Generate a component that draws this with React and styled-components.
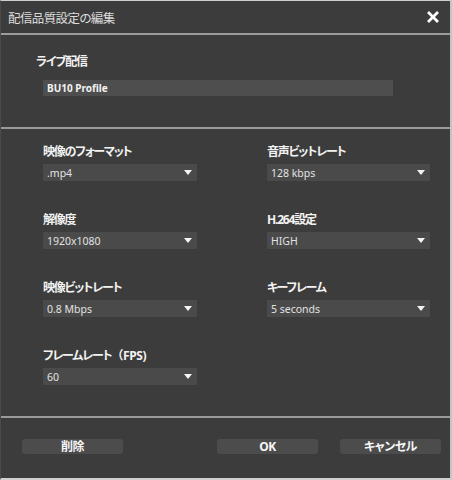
import React from 'react';
import styled, { createGlobalStyle } from 'styled-components';

const GlobalStyle = createGlobalStyle`
  html, body {
    margin: 0;
    padding: 0;
    background: #d6d6d6;
  }
  * {
    box-sizing: border-box;
  }
`;

const fields = [
  { label: '映像のフォーマット', value: '.mp4', side: 'left' },
  { label: '音声ビットレート', value: '128 kbps', side: 'right' },
  { label: '解像度', value: '1920x1080', side: 'left' },
  { label: 'H.264設定', value: 'HIGH', side: 'right' },
  { label: '映像ビットレート', value: '0.8 Mbps', side: 'left' },
  { label: 'キーフレーム', value: '5 seconds', side: 'right' },
  { label: 'フレームレート', note: '（FPS)', value: '60', side: 'left' },
];

export default function App() {
  return (
    <>
      <GlobalStyle />
      <Dialog>
        <TitleBar>
          <Title>配信品質設定の編集</Title>
          <CloseButton aria-label="close">
            <svg width="12" height="12" viewBox="0 0 12 12">
              <path d="M2 2 L10 10 M10 2 L2 10" stroke="#fff" strokeWidth="2.8" strokeLinecap="square" />
            </svg>
          </CloseButton>
        </TitleBar>

        <ProfileSection>
          <Label>ライブ配信</Label>
          <NameInput>BU10 Profile</NameInput>
        </ProfileSection>

        <FieldGrid>
          {fields.map((f) => (
            <Field key={f.label}>
              <Label>
                {f.label}
                {f.note && <Note>{f.note}</Note>}
              </Label>
              <Select $wide={f.side === 'right'}>
                <span>{f.value}</span>
                <Caret />
              </Select>
            </Field>
          ))}
        </FieldGrid>

        <Footer>
          <Button>削除</Button>
          <Spacer />
          <Button>OK</Button>
          <Button>キャンセル</Button>
        </Footer>
      </Dialog>
    </>
  );
}

const Dialog = styled.div`
  width: 452px;
  height: 480px;
  background: #3c3c3c;
  border-top: 1px solid #cfcfcf;
  border-right: 2px solid #c4c4c4;
  border-bottom: 2px solid #d0d0d0;
  border-left: 1px solid #4a4a4a;
  display: flex;
  flex-direction: column;
  font-family: "Noto Sans", "Noto Sans CJK JP", sans-serif;
  font-feature-settings: "palt";
  color: #fff;
`;

const TitleBar = styled.div`
  height: 34px;
  flex: none;
  display: flex;
  align-items: center;
  justify-content: space-between;
  padding: 0 10px 0 7px;
  border-bottom: 2px solid #9c9c9c;
`;

const Title = styled.div`
  font-size: 12.5px;
  color: #dcdcdc;
  letter-spacing: -0.6px;
`;

const CloseButton = styled.div`
  width: 14px;
  height: 14px;
  display: flex;
  align-items: center;
  justify-content: center;
`;

const ProfileSection = styled.div`
  height: 94px;
  flex: none;
  padding: 19px 0 0 35px;
  border-bottom: 2px solid #9a9a9a;
`;

const Label = styled.div`
  font-size: 12px;
  font-weight: 700;
  line-height: 16px;
  letter-spacing: -1.2px;
  color: #f2f2f2;
  white-space: nowrap;
`;

const Note = styled.span`
  font-feature-settings: normal;
  letter-spacing: -0.4px;
`;

const NameInput = styled.div`
  margin: 10px 0 0 7px;
  width: 350px;
  height: 16px;
  background: #4e4e4e;
  padding-left: 4px;
  font-size: 10px;
  font-weight: 700;
  line-height: 16px;
  color: #f2f2f2;
`;

const FieldGrid = styled.div`
  flex: none;
  height: 289px;
  display: grid;
  grid-template-columns: 154px 163px;
  column-gap: 70px;
  row-gap: 31px;
  align-content: start;
  padding: 15px 0 0 42px;
  border-bottom: 2px solid #9a9a9a;
`;

const Field = styled.div`
  display: flex;
  flex-direction: column;
  gap: 4px;
`;

const Select = styled.div`
  width: ${(p) => (p.$wide ? '163px' : '154px')};
  height: 17px;
  background: #4a4a4a;
  display: flex;
  align-items: center;
  justify-content: space-between;
  padding: 0 4px 0 4px;
  font-size: 10.5px;
  color: #e2e2e2;
`;

const Caret = styled.span`
  width: 0;
  height: 0;
  margin-right: 1px;
  border-left: 4px solid transparent;
  border-right: 4px solid transparent;
  border-top: 5px solid #f4f4f4;
`;

const Footer = styled.div`
  flex: 1;
  display: flex;
  align-items: center;
  gap: 22px;
  padding: 0 9px 4px 21px;
`;

const Spacer = styled.div`
  flex: 1;
`;

const Button = styled.div`
  width: 101px;
  height: 15px;
  border-radius: 3px;
  background: #4c4c4c;
  display: flex;
  align-items: center;
  justify-content: center;
  font-size: 12px;
  font-weight: 700;
  letter-spacing: -0.5px;
  color: #f6f6f6;
`;
